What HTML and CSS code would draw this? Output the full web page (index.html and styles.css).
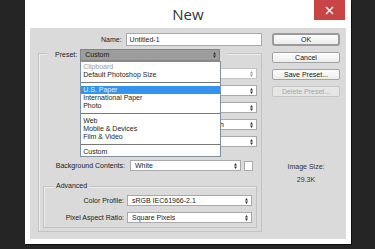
FILE: index.html
```html
<!DOCTYPE html>
<html lang="en">

<head>
    <meta charset="UTF-8">
    <meta name="viewport" content="width=device-width, initial-scale=1.0">
    <title>New</title>
    <link rel="stylesheet" href="styles.css">
</head>

<body>
    <div class="dialog">
        <div class="titlebar">
            <span class="title">New</span>
            <button class="close" aria-label="Close">
                <svg width="9" height="9" viewBox="0 0 9 9"><path d="M1 1L8 8M8 1L1 8" stroke="#fff" stroke-width="1.4"/></svg>
            </button>
        </div>
        <div class="panel">
            <div class="left">
                <div class="name-row">
                    <label class="name-label" for="name">Name:</label>
                    <input class="name-input" type="text" id="name" value="Untitled-1">
                </div>
                <div class="group">
                    <div class="legend preset-legend">
                        <span class="preset-label">Preset:</span>
                        <div class="select select-dark">
                            <span>Custom</span>
                            <svg class="arrow" width="3" height="6" viewBox="0 0 3 6"><path d="M1.5 0L3 2.4H0ZM1.5 6L3 3.6H0Z"/></svg>
                            <ul class="menu">
                                <li class="off">Clipboard</li>
                                <li>Default Photoshop Size</li>
                                <li class="sep"></li>
                                <li class="picked">U.S. Paper</li>
                                <li>International Paper</li>
                                <li>Photo</li>
                                <li class="sep"></li>
                                <li>Web</li>
                                <li>Mobile &amp; Devices</li>
                                <li>Film &amp; Video</li>
                                <li class="sep"></li>
                                <li>Custom</li>
                            </ul>
                        </div>
                    </div>
                    <!-- rows below sit under the open menu; only their right ends show -->
                    <div class="row row-first">
                        <span class="label"></span>
                        <div class="select select-off wide"><span></span>
                            <svg class="arrow" width="3" height="6" viewBox="0 0 3 6"><path d="M1.5 0L3 2.4H0ZM1.5 6L3 3.6H0Z"/></svg></div>
                    </div>
                    <div class="row">
                        <span class="label"></span>
                        <div class="field"></div>
                        <div class="select unit"><span></span>
                            <svg class="arrow" width="3" height="6" viewBox="0 0 3 6"><path d="M1.5 0L3 2.4H0ZM1.5 6L3 3.6H0Z"/></svg></div>
                    </div>
                    <div class="row">
                        <span class="label"></span>
                        <div class="field"></div>
                        <div class="select unit"><span></span>
                            <svg class="arrow" width="3" height="6" viewBox="0 0 3 6"><path d="M1.5 0L3 2.4H0ZM1.5 6L3 3.6H0Z"/></svg></div>
                    </div>
                    <div class="row">
                        <span class="label"></span>
                        <div class="field"></div>
                        <div class="select unit"><span>Pixels/Inch</span>
                            <svg class="arrow" width="3" height="6" viewBox="0 0 3 6"><path d="M1.5 0L3 2.4H0ZM1.5 6L3 3.6H0Z"/></svg></div>
                    </div>
                    <div class="row">
                        <span class="label"></span>
                        <div class="select wide"><span></span>
                            <svg class="arrow" width="3" height="6" viewBox="0 0 3 6"><path d="M1.5 0L3 2.4H0ZM1.5 6L3 3.6H0Z"/></svg></div>
                    </div>
                    <div class="row row-bg">
                        <span class="label">Background Contents:</span>
                        <div class="select bg"><span>White</span>
                            <svg class="arrow" width="3" height="6" viewBox="0 0 3 6"><path d="M1.5 0L3 2.4H0ZM1.5 6L3 3.6H0Z"/></svg></div>
                        <div class="swatch"></div>
                    </div>
                    <div class="group advanced">
                        <div class="legend adv-legend">Advanced</div>
                        <div class="row adv-row adv-first">
                            <span class="label adv-label">Color Profile:</span>
                            <div class="select adv-select"><span>sRGB IEC61966-2.1</span>
                                <svg class="arrow" width="3" height="6" viewBox="0 0 3 6"><path d="M1.5 0L3 2.4H0ZM1.5 6L3 3.6H0Z"/></svg></div>
                        </div>
                        <div class="row adv-row">
                            <span class="label adv-label">Pixel Aspect Ratio:</span>
                            <div class="select adv-select"><span>Square Pixels</span>
                                <svg class="arrow" width="3" height="6" viewBox="0 0 3 6"><path d="M1.5 0L3 2.4H0ZM1.5 6L3 3.6H0Z"/></svg></div>
                        </div>
                    </div>
                </div>
            </div>
            <div class="right">
                <button class="btn btn-ok">OK</button>
                <button class="btn">Cancel</button>
                <button class="btn">Save Preset...</button>
                <button class="btn" disabled>Delete Preset...</button>
                <div class="size-info">
                    <div>Image Size:</div>
                    <div class="size-value">29.3K</div>
                </div>
            </div>
        </div>
    </div>
</body>

</html>
```

FILE: styles.css
```css
body {
    margin: 0;
    width: 375px;
    height: 249px;
    overflow: hidden;
    background-color: #252525;
    font-family: "Liberation Sans", Arial, sans-serif;
    font-size: 7px;
    line-height: 8px;
    color: #222;
}

.dialog {
    width: 326px;
    height: 244px;
    margin-left: 25px;
    background-color: #fff;
    box-shadow: 1px 1px 0 #0e0e0e;
    display: flex;
    flex-direction: column;
}

.titlebar {
    height: 28px;
    display: grid;
    grid-template-columns: 1fr auto 1fr;
}

.title {
    grid-column: 2;
    font-family: "Open Sans", sans-serif;
    font-size: 15px;
    line-height: 15px;
    padding-top: 7px;
    color: #333;
}

.close {
    grid-column: 3;
    justify-self: end;
    width: 31px;
    height: 20px;
    margin-right: 6px;
    padding: 0;
    border: none;
    background-color: #c94444;
    display: flex;
    align-items: center;
    justify-content: center;
}

.panel {
    flex: 1;
    margin: 0 5px 5px;
    padding-left: 8px;
    background-color: #dadada;
    display: flex;
    gap: 10px;
}

.left {
    width: 224px;
}

.name-row {
    display: flex;
    align-items: center;
    margin-top: 5px;
    height: 13px;
}

.name-label {
    width: 84px;
    margin-right: 4px;
    text-align: right;
}

.name-input {
    width: 137px;
    height: 13px;
    box-sizing: border-box;
    margin: 0;
    padding: 0 0 0 3px;
    border: 1px solid #a9a9a9;
    background-color: #fff;
    font: inherit;
    color: #222;
    outline: none;
}

.group {
    margin-top: 7px;
    height: 179px;
    box-sizing: border-box;
    border: 1px solid #c3c3c3;
    box-shadow: inset 1px 1px 0 #ececec;
}

.legend {
    background-color: #dadada;
}

.preset-legend {
    display: flex;
    align-items: center;
    width: fit-content;
    margin: -5px 0 0 8px;
    padding: 0 8px;
}

.preset-label {
    margin-right: 3px;
}

.select {
    position: relative;
    height: 11px;
    box-sizing: border-box;
    border: 1px solid #a9a9a9;
    background-color: #fff;
    padding-left: 4px;
    display: flex;
    align-items: center;
    justify-content: space-between;
    padding-right: 3px;
}

.arrow {
    fill: #333;
}

.select-dark {
    width: 140px;
    height: 12px;
    background-color: #9d9d9d;
    border-color: #858585;
    color: #1a1a1a;
}

.select-off {
    color: #9a9a9a;
    border-color: #c4c4c4;
}

.select-off .arrow {
    fill: #999;
}

.menu {
    position: absolute;
    top: 11px;
    left: -1px;
    z-index: 2;
    width: 141px;
    box-sizing: border-box;
    margin: 0;
    padding: 1px 0 0;
    list-style: none;
    background-color: #fff;
    border: 1px solid #7f90a3;
    color: #1e1e1e;
}

.menu li {
    height: 8px;
    padding-left: 2px;
}

.menu .off {
    color: #9a9a9a;
}

.menu .picked {
    background-color: #3593f0;
    color: #e6f1ff;
}

.menu .sep {
    height: 1px;
    padding: 0;
    margin: 3px 0;
    background-color: #777;
}

.row {
    display: flex;
    align-items: center;
    height: 11px;
    margin-top: 6px;
}

.row-first {
    margin-top: 7px;
}

.row-bg {
    margin-top: 13px;
}

.label {
    width: 86px;
    margin-right: 5px;
    text-align: right;
    white-space: nowrap;
}

.wide {
    width: 127px;
}

.field {
    width: 50px;
    height: 11px;
    box-sizing: border-box;
    border: 1px solid #a9a9a9;
    background-color: #fff;
    margin-right: 5px;
}

.unit {
    width: 72px;
}

.bg {
    width: 111px;
}

.swatch {
    width: 9px;
    height: 10px;
    box-sizing: border-box;
    margin-left: 3px;
    border: 1px solid #aaa;
    background-color: #fff;
}

.advanced {
    height: 42px;
    margin: 15px 4px 0;
}

.adv-legend {
    width: fit-content;
    margin: -5px 0 0 10px;
    padding: 0 2px;
}

.adv-first {
    margin-top: 5px;
}

.adv-label {
    width: 80px;
    margin-right: 3px;
}

.adv-select {
    width: 125px;
}

.right {
    width: 68px;
    display: flex;
    flex-direction: column;
}

.btn {
    height: 11px;
    margin: 6px 0 0;
    padding: 0;
    border: 1px solid #a3a3a3;
    border-radius: 2px;
    background: linear-gradient(#fdfdfd, #ececec);
    font: inherit;
    color: #222;
}

.btn-ok {
    height: 13px;
    margin-top: 5px;
    border: 2px solid #9a9a9a;
    border-radius: 3px;
}

.btn:disabled {
    color: #a5a5a5;
    border-color: #c6c6c6;
    background: #e6e6e6;
}

.size-info {
    margin-top: 66px;
    text-align: center;
    color: #333;
}

.size-value {
    margin-top: 5px;
}
```
